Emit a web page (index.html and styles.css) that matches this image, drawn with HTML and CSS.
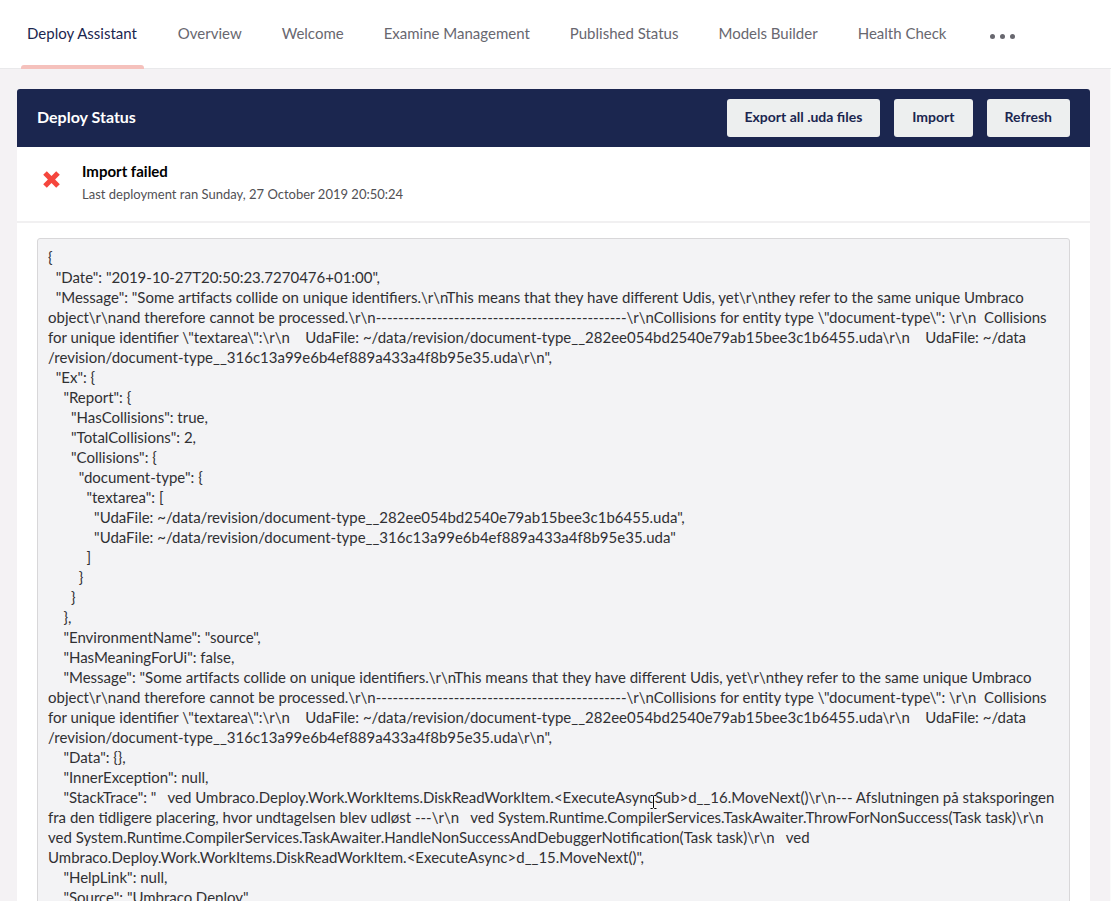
FILE: index.html
```html
<!DOCTYPE html>
<html lang="en">
<head>
<meta charset="utf-8">
<title>Deploy Status</title>
<link rel="stylesheet" href="styles.css">
</head>
<body>
<nav class="tabs">
  <a class="tab tab-active">Deploy Assistant</a>
  <a class="tab">Overview</a>
  <a class="tab">Welcome</a>
  <a class="tab">Examine Management</a>
  <a class="tab">Published Status</a>
  <a class="tab">Models Builder</a>
  <a class="tab">Health Check</a>
  <a class="tab tab-more"><i class="dot"></i><i class="dot"></i><i class="dot"></i></a>
</nav>
<main class="content">
  <section class="panel">
    <header class="panel-head">
      <h1 class="panel-title">Deploy Status</h1>
      <div class="actions">
        <button class="btn btn-export">Export all .uda files</button>
        <button class="btn">Import</button>
        <button class="btn">Refresh</button>
      </div>
    </header>
    <div class="status">
      <svg class="status-icon" viewBox="0 0 18 18" aria-hidden="true"><path d="M3.8 0.2 8.5 4.9 13.2 0.2 16.8 3.8 12.1 8.5 16.8 13.2 13.2 16.8 8.5 12.1 3.8 16.8 0.2 13.2 4.9 8.5 0.2 3.8Z"/></svg>
      <div class="status-text">
        <div class="status-title">Import failed</div>
        <div class="status-sub">Last deployment ran Sunday, 27 October 2019 20:50:24</div>
      </div>
    </div>
    <div class="log-wrap">
<pre class="log">{
  "Date": "2019-10-27T20:50:23.7270476+01:00",
  "Message": "Some artifacts collide on unique identifiers.\r\nThis means that they have different Udis, yet\r\nthey refer to the same unique Umbraco object\r\nand therefore cannot be processed.\r\n---------------------------------------------\r\nCollisions for entity type \"document-type\": \r\n  Collisions for unique identifier \"textarea\":\r\n    UdaFile: ~/data/revision/document-type__282ee054bd2540e79ab15bee3c1b6455.uda\r\n    UdaFile: ~/data<wbr>/revision/document-type__316c13a99e6b4ef889a433a4f8b95e35.uda\r\n",
  "Ex": {
    "Report": {
      "HasCollisions": true,
      "TotalCollisions": 2,
      "Collisions": {
        "document-type": {
          "textarea": [
            "UdaFile: ~/data/revision/document-type__282ee054bd2540e79ab15bee3c1b6455.uda",
            "UdaFile: ~/data/revision/document-type__316c13a99e6b4ef889a433a4f8b95e35.uda"
          ]
        }
      }
    },
    "EnvironmentName": "source",
    "HasMeaningForUi": false,
    "Message": "Some artifacts collide on unique identifiers.\r\nThis means that they have different Udis, yet\r\nthey refer to the same unique Umbraco object\r\nand therefore cannot be processed.\r\n---------------------------------------------\r\nCollisions for entity type \"document-type\": \r\n  Collisions for unique identifier \"textarea\":\r\n    UdaFile: ~/data/revision/document-type__282ee054bd2540e79ab15bee3c1b6455.uda\r\n    UdaFile: ~/data<wbr>/revision/document-type__316c13a99e6b4ef889a433a4f8b95e35.uda\r\n",
    "Data": {},
    "InnerException": null,
    "StackTrace": "   ved Umbraco.Deploy.Work.WorkItems.DiskReadWorkItem.&lt;ExecuteAsyncSub&gt;d__16.MoveNext()\r\n--- Afslutningen på staksporingen fra den tidligere placering, hvor undtagelsen blev udløst ---\r\n   ved System.Runtime.CompilerServices.TaskAwaiter.ThrowForNonSuccess(Task task)\r\n   ved System.Runtime.CompilerServices.TaskAwaiter.HandleNonSuccessAndDebuggerNotification(Task task)\r\n   ved Umbraco.Deploy.Work.WorkItems.DiskReadWorkItem.&lt;ExecuteAsync&gt;d__15.MoveNext()",
    "HelpLink": null,
    "Source": "Umbraco.Deploy"
  }
}</pre>
    </div>
  </section>
</main>
<svg class="cursor" viewBox="0 0 9 16" aria-hidden="true"><path class="cursor-halo" d="M1 1H3.5L4.5 2 5.5 1H8V2.5H5.5V13.5H8V15H5.5L4.5 14 3.5 15H1V13.5H3.5V2.5H1Z"/><path class="cursor-beam" d="M1.5 1.5H3.5L4.5 2.5 5.5 1.5H7.5M4.5 2.5V13.5M1.5 14.5H3.5L4.5 13.5 5.5 14.5H7.5"/></svg>
</body>
</html>
```
FILE: styles.css
```css
* { box-sizing: border-box; }
html, body { margin: 0; height: 901px; overflow: hidden; }
body {
  position: relative;
  background: #f4f2f4;
  color: #1b264f;
  font-family: Lato, "Open Sans", sans-serif;
  font-size: 14px;
  line-height: 20px;
}
.tabs {
  display: flex;
  align-items: stretch;
  height: 69px;
  padding-left: 7px;
  background: #fff;
  border-bottom: 1px solid #e9e9eb;
}
.tab {
  position: relative;
  display: flex;
  align-items: center;
  padding: 0 20px 2px;
  font-size: 15px;
  color: #68676f;
}
.tab-active { color: #1b264f; padding-right: 21px; }
.tab-active::after {
  content: "";
  position: absolute;
  left: 14px;
  right: 14px;
  bottom: -1px;
  height: 4px;
  background: #f5c1bc;
  border-radius: 3px 3px 0 0;
}
.tab-more { gap: 5px; padding: 5px 20px 0 24px; }
.dot { width: 5px; height: 5px; border-radius: 50%; background: #68676f; }
.content {
  height: 832px;
  padding: 20px 20px 0 17px;
  border-right: 1px solid #fbfbfb;
}
.panel { background: #fff; border-radius: 3px 3px 0 0; }
.panel-head {
  display: flex;
  align-items: center;
  justify-content: space-between;
  height: 58px;
  padding: 0 20px;
  background: #1b264f;
  border-radius: 3px 3px 0 0;
}
.panel-title { margin: 0; padding-bottom: 2px; font-size: 16px; font-weight: 700; color: #fff; line-height: 20px; }
.actions { display: flex; gap: 14px; }
.btn {
  height: 38px;
  padding: 0 18px 2px;
  border: 0;
  border-radius: 3px;
  background: #edefef;
  color: #1b264f;
  font: 700 14px/20px Lato, "Open Sans", sans-serif;
}
.btn-export { padding-left: 17.5px; }
.status {
  display: flex;
  align-items: center;
  gap: 21px;
  height: 76px;
  padding: 0 26px 3px;
  border-bottom: 2px solid #f1f0f1;
}
.status-icon { align-self: flex-start; margin-top: 24px; width: 18px; height: 18px; flex: none; fill: #f5463d; }
.status-title { font-size: 15px; font-weight: 700; color: #000; }
.status-sub { margin-top: 3px; font-size: 13px; color: #515054; }
.log-wrap { padding: 15px 20px 0; }
.log {
  margin: 0;
  padding: 8px 10px;
  background: #f3f3f5;
  border: 1px solid #d8d7d9;
  border-radius: 3px;
  color: #303033;
  font-family: Lato, "Open Sans", sans-serif;
  font-size: 15px;
  line-height: 20px;
  white-space: pre-wrap;
}
.cursor { position: absolute; left: 649px; top: 794px; width: 9px; height: 16px; }
.cursor-halo { fill: #fff; }
.cursor-beam { fill: none; stroke: #000; stroke-width: 1; }
```
